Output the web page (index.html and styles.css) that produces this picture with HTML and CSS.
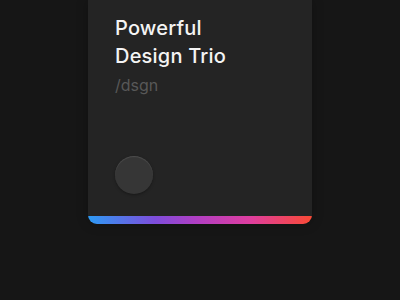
FILE: index.html
```html
<!DOCTYPE html>
<html lang="en">
<head>
    <meta charset="UTF-8">
    <meta name="viewport" content="width=device-width, initial-scale=1.0">
    <title>Powerful Design Trio</title>
    <link rel="stylesheet" href="styles.css">
</head>
<body>
    <main class="stage">
        <div class="card">
            <div class="card-body">
                <h1 class="title">Powerful<br>Design Trio</h1>
                <p class="handle">/dsgn</p>
                <button class="knob"></button>
            </div>
            <div class="strip"></div>
        </div>
    </main>
</body>
</html>
```

FILE: styles.css
```css
*{
    margin: 0;
    padding: 0;
    box-sizing: border-box;
}
body{
    background-color: #161616;
    font-family: Inter, "Noto Sans", sans-serif;
}
.stage{
    height: 300px;
    padding-left: 88px;
}
.card{
    width: 224px;
    height: 224px;
    background-color: #242424;
    border-radius: 0 0 9px 9px;
    overflow: hidden;
    display: flex;
    flex-direction: column;
    box-shadow: 0 0 12px rgba(0, 0, 0, 0.25);
}
.card-body{
    flex: 1;
    padding: 14px 27px 0;
}
.title{
    color: #f4f4f4;
    font-size: 20px;
    font-weight: 500;
    line-height: 28px;
    letter-spacing: 0.2px;
}
.handle{
    color: #585858;
    font-size: 16px;
    line-height: 20px;
    margin-top: 5px;
}
.knob{
    display: block;
    width: 38px;
    height: 38px;
    margin-top: 61px;
    border-radius: 50%;
    border: none;
    background-color: #363636;
    box-shadow: inset 0 1px 1px rgba(255, 255, 255, 0.12), 0 1px 3px rgba(0, 0, 0, 0.35);
}
.strip{
    height: 8px;
    background: linear-gradient(90deg, #2d9bf5 0%, #7e4ddb 30%, #b03fc4 48%, #de3ea0 72%, #fa4a35 100%);
}
```
